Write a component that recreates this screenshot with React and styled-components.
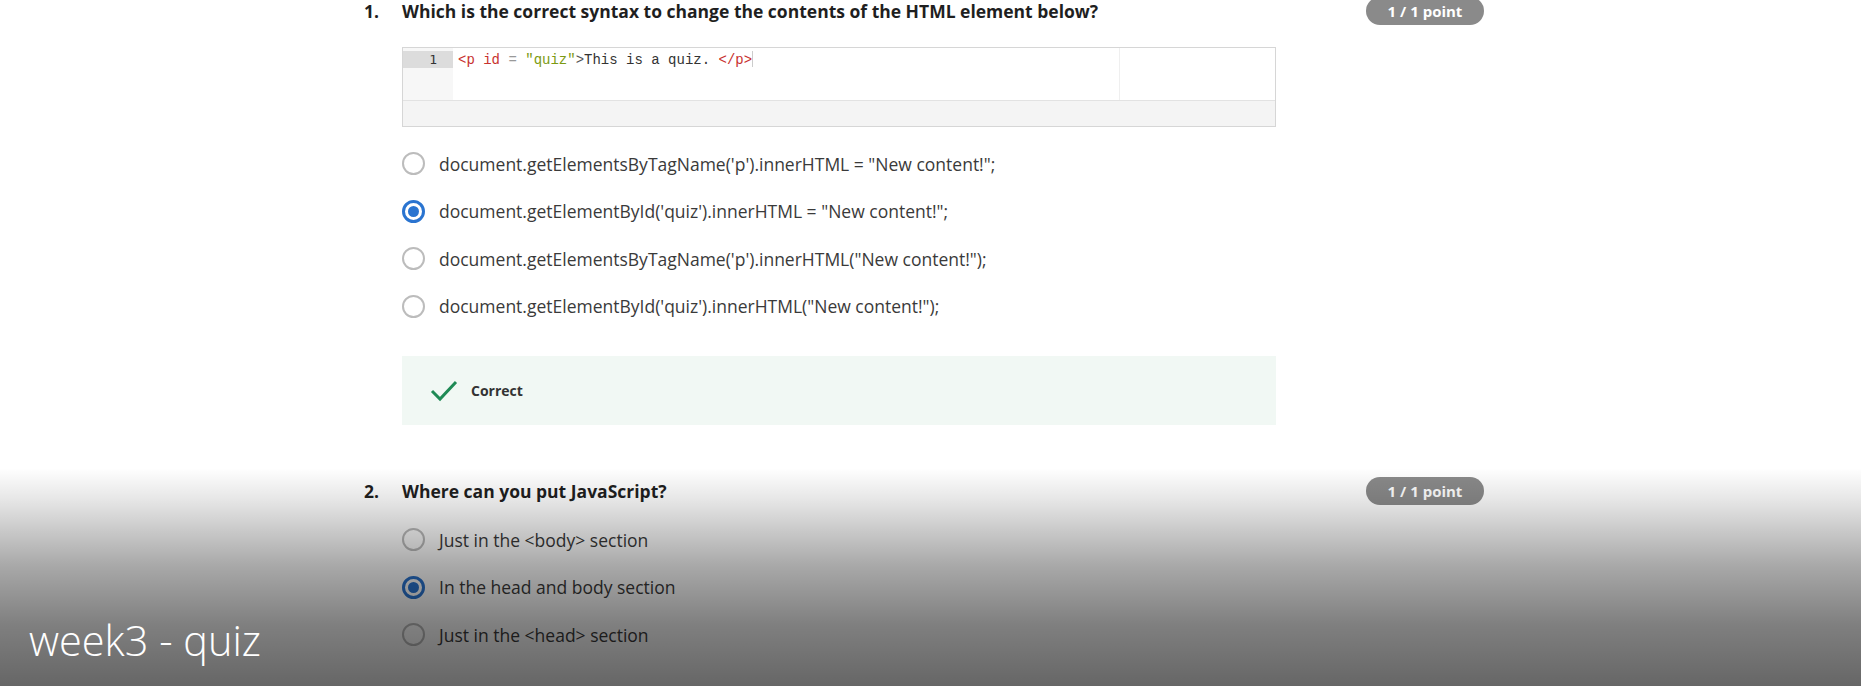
import React from 'react';
import styled, { createGlobalStyle } from 'styled-components';

const GlobalStyle = createGlobalStyle`
  body {
    margin: 0;
    background: #fff;
    font-family: "Open Sans", "Noto Sans", sans-serif;
    overflow: hidden;
  }
`;

const Page = styled.div`
  position: relative;
  height: 686px;
  overflow: hidden;
`;

const Main = styled.main`
  width: 1120px;
  margin: -3px 0 0 364px;
`;

const Question = styled.section`
  & + & {
    margin-top: 52px;
  }
`;

const Header = styled.div`
  display: flex;
  align-items: center;
  height: 28px;
`;

const Num = styled.span`
  width: 38px;
  font-size: 17.5px;
  font-weight: 700;
  color: #1f1f1f;
`;

const Prompt = styled.h3`
  flex: 1;
  margin: 0;
  font-size: 17.5px;
  font-weight: 700;
  color: #1f1f1f;
`;

const Badge = styled.span`
  width: 118px;
  height: 28px;
  border-radius: 14px;
  background: #8a8a8a;
  color: #fff;
  font-size: 15px;
  font-weight: 700;
  display: flex;
  align-items: center;
  justify-content: center;
`;

const Body = styled.div`
  margin-left: 38px;
  width: 874px;
`;

const Editor = styled.div`
  margin-top: 22px;
  border: 1px solid #d6d6d6;
  height: 78px;
  display: flex;
  flex-direction: column;
`;

const EditorMain = styled.div`
  display: flex;
  height: 52px;
  background: #fff;
  border-bottom: 1px solid #e2e2e2;
`;

const Gutter = styled.div`
  width: 50px;
  background: #f7f7f7;
  padding-top: 3px;
`;

const LineNo = styled.div`
  height: 17px;
  background: #dcdcdc;
  text-align: right;
  padding-right: 16px;
  font-family: "DejaVu Sans Mono", "Liberation Mono", monospace;
  font-size: 13px;
  line-height: 17px;
  color: #333;
`;

const CodeArea = styled.div`
  flex: 1;
  display: grid;
  grid-template-columns: 666px 1fr;
`;

const CodeLine = styled.div`
  padding: 3px 0 0 5px;
  font-family: "Liberation Mono", "DejaVu Sans Mono", monospace;
  font-size: 14px;
  line-height: 17px;
  color: #333;
  white-space: pre;
`;

const Token = styled.span`
  color: ${(p) => p.$color};
`;

const Cursor = styled.span`
  display: inline-block;
  width: 1px;
  height: 16px;
  background: #ccc;
  vertical-align: -3px;
`;

const PrintMargin = styled.div`
  border-left: 1px solid #efefef;
`;

const EditorFooter = styled.div`
  flex: 1;
  background: #f4f4f4;
`;

const Options = styled.div`
  margin-top: ${(p) => p.$gap}px;
`;

const Option = styled.label`
  display: flex;
  align-items: center;
  gap: 14px;
  height: 47.5px;
  font-size: 17.5px;
  color: #3a3a3a;
`;

const Radio = styled.span`
  box-sizing: border-box;
  width: 23px;
  height: 23px;
  border-radius: 50%;
  border: ${(p) => (p.$checked ? '3px solid #2a74d0' : '2px solid #bcbcbc')};
  display: flex;
  align-items: center;
  justify-content: center;

  &::after {
    content: '';
    width: 11px;
    height: 11px;
    border-radius: 50%;
    background: ${(p) => (p.$checked ? '#2a74d0' : 'transparent')};
  }
`;

const Feedback = styled.div`
  margin-top: 26px;
  height: 69px;
  background: #f1f8f4;
  display: flex;
  align-items: center;
  gap: 13px;
  padding-left: 28px;
  font-size: 14px;
  font-weight: 700;
  color: #333;
`;

const Overlay = styled.div`
  position: absolute;
  left: 0;
  right: 0;
  top: 468px;
  bottom: 0;
  pointer-events: none;
  background: linear-gradient(
    to bottom,
    rgba(0, 0, 0, 0) 0%,
    rgba(0, 0, 0, 0.1) 15%,
    rgba(0, 0, 0, 0.34) 45%,
    rgba(0, 0, 0, 0.5) 72%,
    rgba(0, 0, 0, 0.6) 100%
  );
  display: flex;
  align-items: flex-end;
  padding: 0 0 25px 29px;
  box-sizing: border-box;
`;

const VideoTitle = styled.div`
  color: #fff;
  font-family: "Open Sans", sans-serif;
  font-weight: 300;
  font-size: 41.5px;
  line-height: 1;
`;

const Check = () => (
  <svg width="28" height="22" viewBox="0 0 28 22">
    <path d="M2 11 L10 19 L26 2" fill="none" stroke="#1f8a55" strokeWidth="3" />
  </svg>
);

const q1Options = [
  { text: 'document.getElementsByTagName(\'p\').innerHTML = "New content!";' },
  { text: 'document.getElementById(\'quiz\').innerHTML = "New content!";', checked: true },
  { text: 'document.getElementsByTagName(\'p\').innerHTML("New content!");' },
  { text: 'document.getElementById(\'quiz\').innerHTML("New content!");' },
];

const q2Options = [
  { text: 'Just in the <body> section' },
  { text: 'In the head and body section', checked: true },
  { text: 'Just in the <head> section' },
];

const App = () => {
  return (
    <Page>
      <GlobalStyle />
      <Main>
        <Question>
          <Header>
            <Num>1.</Num>
            <Prompt>Which is the correct syntax to change the contents of the HTML element below?</Prompt>
            <Badge>1 / 1 point</Badge>
          </Header>
          <Body>
            <Editor>
              <EditorMain>
                <Gutter>
                  <LineNo>1</LineNo>
                </Gutter>
                <CodeArea>
                  <CodeLine>
                    <Token $color="#c8312f">&lt;p id</Token>
                    <Token $color="#999"> = </Token>
                    <Token $color="#7c9a12">"quiz"</Token>
                    <Token $color="#555">&gt;</Token>
                    This is a quiz. <Token $color="#c8312f">&lt;/p&gt;</Token>
                    <Cursor />
                  </CodeLine>
                  <PrintMargin />
                </CodeArea>
              </EditorMain>
              <EditorFooter />
            </Editor>
            <Options $gap={13}>
              {q1Options.map((o) => (
                <Option key={o.text}>
                  <Radio $checked={o.checked} />
                  {o.text}
                </Option>
              ))}
            </Options>
            <Feedback>
              <Check />
              Correct
            </Feedback>
          </Body>
        </Question>
        <Question>
          <Header>
            <Num>2.</Num>
            <Prompt>Where can you put JavaScript?</Prompt>
            <Badge>1 / 1 point</Badge>
          </Header>
          <Body>
            <Options $gap={11}>
              {q2Options.map((o) => (
                <Option key={o.text}>
                  <Radio $checked={o.checked} />
                  {o.text}
                </Option>
              ))}
            </Options>
          </Body>
        </Question>
      </Main>
      <Overlay>
        <VideoTitle>week3 - quiz</VideoTitle>
      </Overlay>
    </Page>
  );
};

export default App;
